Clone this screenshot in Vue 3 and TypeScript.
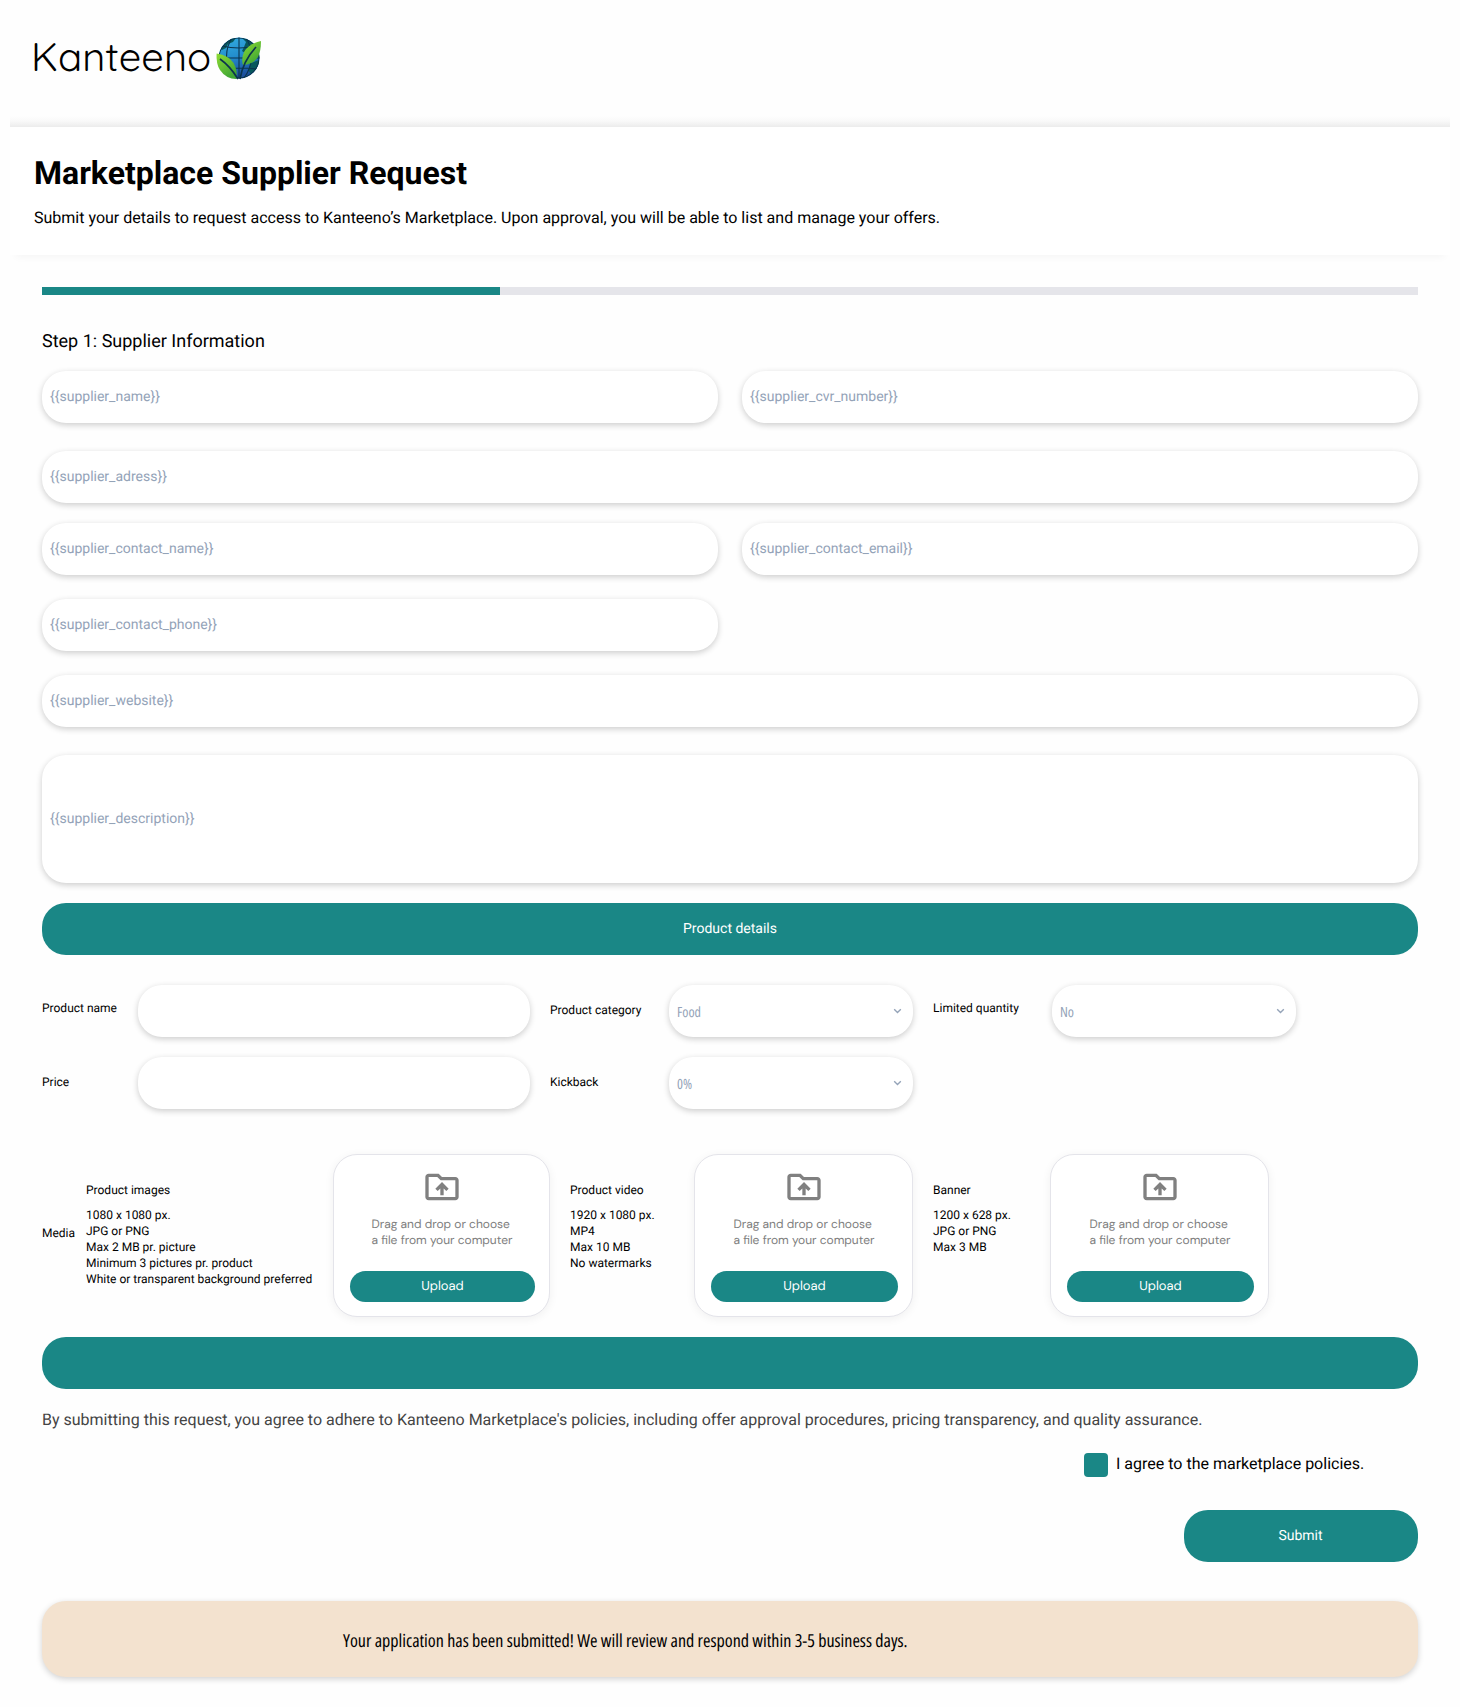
<script setup lang="ts">
interface Field { text: string }
interface MediaItem { title: string; specs: string[]; key: string }

const progress = 33.285
const rowOne: Field[] = [{ text: '{{supplier_name}}' }, { text: '{{supplier_cvr_number}}' }]
const address = '{{supplier_adress}}'
const rowThree: Field[] = [{ text: '{{supplier_contact_name}}' }, { text: '{{supplier_contact_email}}' }]
const phone = '{{supplier_contact_phone}}'
const website = '{{supplier_website}}'
const description = '{{supplier_description}}'

const media: MediaItem[] = [
  {
    key: 'images',
    title: 'Product images',
    specs: ['1080 x 1080 px.', 'JPG or PNG', 'Max 2 MB pr. picture', 'Minimum 3 pictures pr. product', 'White or transparent background preferred'],
  },
  { key: 'video', title: 'Product video', specs: ['1920 x 1080 px.', 'MP4', 'Max 10 MB', 'No watermarks'] },
  { key: 'banner', title: 'Banner', specs: ['1200 x 628 px.', 'JPG or PNG', 'Max 3 MB'] },
]
</script>

<template>
  <div class="page">
    <header class="brand">
      <span class="brand-name">Kanteeno</span>
      <svg class="globe" width="46" height="44" viewBox="0 0 46 44">
        <defs>
          <linearGradient id="sea" x1="0" y1="0" x2="0.3" y2="1">
            <stop offset="0" stop-color="#35aee0" />
            <stop offset="0.5" stop-color="#2490cf" />
            <stop offset="1" stop-color="#1c4f9e" />
          </linearGradient>
          <linearGradient id="leaf" x1="0" y1="0" x2="0.6" y2="1">
            <stop offset="0" stop-color="#8fdc33" />
            <stop offset="1" stop-color="#3fa535" />
          </linearGradient>
          <clipPath id="ball"><circle cx="23" cy="22" r="20.5" /></clipPath>
        </defs>
        <circle cx="23" cy="22" r="20.5" fill="url(#sea)" />
        <g clip-path="url(#ball)">
          <path d="M5 13 9 7l6-5 5 0-3 4-5 2-2 4-4 2zM26 2l10 3 8 10v7l-8-6-7 1-3-2 2-4 2-5zM35 27l8-3v8l-8 6-3-4z" fill="#07585c" />
          <g fill="none" stroke="#0b344e" stroke-width="1.1">
            <circle cx="23" cy="22" r="20" />
            <path d="M23 1v42M16 2C8 14 9 30 18 42M30 2c8 12 7 28-2 40M6 10q17 4 34 0M2 22h42M5 33q18-2 36 0" />
          </g>
        </g>
        <path d="M.6 17.5q12 1.500 17 9.500 4 7 3 16Q10 43 4 34 0 28 .6 17.500z" fill="url(#leaf)" />
        <path d="M45 5Q32 8 28 16q-3 7-1 13 11-1 15-8 3-6 3-16z" fill="url(#leaf)" />
        <path d="M4 23q10 7 18 20M40 11Q27 25 24 43" fill="none" stroke="#0b344e" stroke-width="1.7" />
      </svg>
    </header>

    <section class="intro">
      <h1>Marketplace Supplier Request</h1>
      <p>Submit your details to request access to Kanteeno’s Marketplace. Upon approval, you will be able to list and manage your offers.</p>
    </section>

    <main>
      <div class="track"><div class="fill" :style="{ width: progress + '%' }"></div></div>
      <h2>Step 1: Supplier Information</h2>

      <div class="row r1">
        <div v-for="f in rowOne" :key="f.text" class="field">{{ f.text }}</div>
      </div>
      <div class="row r2"><div class="field">{{ address }}</div></div>
      <div class="row r3">
        <div v-for="f in rowThree" :key="f.text" class="field">{{ f.text }}</div>
      </div>
      <div class="row r3"><div class="field half">{{ phone }}</div></div>
      <div class="row r4"><div class="field">{{ website }}</div></div>
      <div class="row"><div class="field tall">{{ description }}</div></div>

      <div class="bar">Product details</div>

      <div class="product">
        <label class="up">Product name</label>
        <div class="field"></div>
        <label class="second">Product category</label>
        <div class="field select"><span>Food</span><svg width="9" height="6" viewBox="0 0 9 6"><path d="M1.2 1.2 4.5 4.4 7.8 1.2" /></svg></div>
        <label class="third up">Limited quantity</label>
        <div class="field select"><span>No</span><svg width="9" height="6" viewBox="0 0 9 6"><path d="M1.2 1.2 4.5 4.4 7.8 1.2" /></svg></div>
      </div>
      <div class="product">
        <label>Price</label>
        <div class="field"></div>
        <label class="second">Kickback</label>
        <div class="field select"><span>0%</span><svg width="9" height="6" viewBox="0 0 9 6"><path d="M1.2 1.2 4.5 4.4 7.8 1.2" /></svg></div>
      </div>

      <div class="media">
        <div class="media-label">Media</div>
        <template v-for="m in media" :key="m.key">
          <div class="specs" :class="m.key">
            <div class="specs-title">{{ m.title }}</div>
            <div v-for="s in m.specs" :key="s">{{ s }}</div>
          </div>
          <div class="drop" :class="m.key">
            <svg width="40" height="40" viewBox="0 0 24 24" fill="#808080">
              <path d="M20 6h-8l-2-2H4c-1.1 0-1.99.9-1.99 2L2 18c0 1.1.9 2 2 2h16c1.1 0 2-.9 2-2V8c0-1.1-.9-2-2-2zm0 12H4V6h5.17l2 2H20v10zM9.41 14.42 11 12.84V17h2v-4.16l1.59 1.59L16 13.01 12.01 9 8 13.01l1.41 1.41z" />
            </svg>
            <div class="hint">Drag and drop or choose<br />a file from your computer</div>
            <div class="upload">Upload</div>
          </div>
        </template>
      </div>

      <div class="bar"></div>
      <p class="terms">By submitting this request, you agree to adhere to Kanteeno Marketplace's policies, including offer approval procedures, pricing transparency, and quality assurance.</p>
      <div class="agree"><span class="box"></span><span class="agree-text">I agree to the marketplace policies.</span></div>
      <div class="bar submit">Submit</div>
      <div class="notice"><span>Your application has been submitted! We will review and respond within 3-5 business days.</span></div>
    </main>
  </div>
</template>

<style>
body { background: #fefefe; }
</style>

<style scoped>
* { box-sizing: border-box; }
.page { width: 1460px; height: 1707px; overflow: hidden; font-family: Roboto, "Liberation Sans", sans-serif; color: #000; text-rendering: geometricPrecision; }
.brand { height: 127px; margin: 0 10px; padding: 36px 0 0 21px; display: flex; align-items: flex-start; overflow: hidden;
  background: linear-gradient(to bottom, #fefefe 0, #fefefe 116px, #f9f9f9 121px, #ececec 127px); }
.brand-name { width: 185px; margin-top: -1px; font: 400 40px/42px Quicksand, Inter, sans-serif; font-feature-settings: "cv11"; white-space: nowrap; }
.globe { flex: none; }
.intro { height: 128px; margin: 0 10px; padding: 27px 24px 0; background: #fff; box-shadow: 0 8px 8px -6px rgba(0, 0, 0, 0.04); }
h1 { margin: 0; font-size: 32px; line-height: 38px; font-weight: 700; }
.intro p { margin: 14px 0 0; font-size: 16px; line-height: 24px; white-space: nowrap; }
main { padding: 32px 42px 0; }
.track { height: 8px; background: #e5e5ea; }
.fill { height: 8px; background: #1a8786; }
h2 { margin: 33px 0 15px; font-size: 18px; line-height: 28px; font-weight: 400; }
.row { display: flex; gap: 24px; }
.row > * { flex: 1; }
.row > .half { flex: none; width: 676px; }
.r1 { margin-bottom: 28px; }
.r2 { margin-bottom: 20px; }
.r3 { margin-bottom: 24px; }
.r4 { margin-bottom: 28px; }
.field { height: 52px; padding: 0 8px 1px; display: flex; align-items: center; border-radius: 24px; background: #fff; color: #94a3b8; font-size: 14px;
  box-shadow: 0 2px 6px rgba(0, 0, 0, 0.2); }
.tall { height: 128px; }
.bar { height: 52px; margin-top: 20px; display: flex; align-items: center; justify-content: center; border-radius: 24px; background: #1a8786; color: #fff; font-size: 14px; padding-bottom: 1px; }
.product { display: grid; grid-template-columns: 96px 392px 139px 244px 139px 244px; height: 52px; margin-top: 30px; align-items: center; font-size: 12px; }
.product + .product { margin-top: 20px; }
.product label { padding-bottom: 2px; }
.product label.up { padding-bottom: 6px; }
.second, .third { padding-left: 20px; }
.select { justify-content: space-between; padding: 0 11px 0 8px; }
.select span { font: 400 14px/20px "Open Sans", sans-serif; font-stretch: 75%; padding-top: 4px; }
.select svg { fill: none; stroke: #94a3b8; stroke-width: 1.4; }
.media { display: flex; height: 163px; margin-top: 45px; font-size: 12px; line-height: 16px; }
.media-label { width: 44px; padding-top: 71px; }
.specs { padding-top: 28px; white-space: nowrap; }
.specs.images { width: 247px; }
.specs.video { width: 144px; padding-left: 20px; }
.specs.banner { width: 137px; padding-left: 20px; }
.specs-title { margin-bottom: 9px; }
.drop { width: 219px; padding: 12px 14px 0 16px; display: flex; flex-direction: column; align-items: center; border: 1px solid #e4e4ea; border-radius: 24px; background: #fff; box-shadow: 0 2px 10px rgba(0, 0, 0, 0.06); }
.drop.images { width: 217px; }
.drop svg { margin-right: 2px; }
.hint { margin: 9px 1px 0 0; height: 32px; font: 400 12px/16px "DM Sans", Lato, sans-serif; color: #808080; white-space: nowrap; }
.upload { width: 100%; height: 31px; margin-top: 23px; border-radius: 16px; background: #1a8786; color: #fff; text-align: center; font: 400 13px/32px "DM Sans", Lato, sans-serif; }
.terms { margin: 19px 0 0; font-size: 16px; line-height: 24px; color: #444; white-space: nowrap; }
.agree { display: flex; margin: 21px 0 0 1042px; gap: 8px; }
.box { width: 24px; height: 24px; border-radius: 4px; background: #1a8786; }
.agree-text { font-size: 16px; line-height: 22px; white-space: nowrap; }
.submit { width: 234px; margin: 33px 0 0 auto; padding-right: 1px; }
.notice { height: 76px; margin-top: 39px; padding: 4px 0 0 301px; display: flex; align-items: center; border-radius: 24px; background: #f3e2cf; box-shadow: 0 2px 6px rgba(0, 0, 0, 0.18); white-space: nowrap; }
.notice span { font: 400 18px/24px "Open Sans", sans-serif; font-stretch: 75%; }
</style>
